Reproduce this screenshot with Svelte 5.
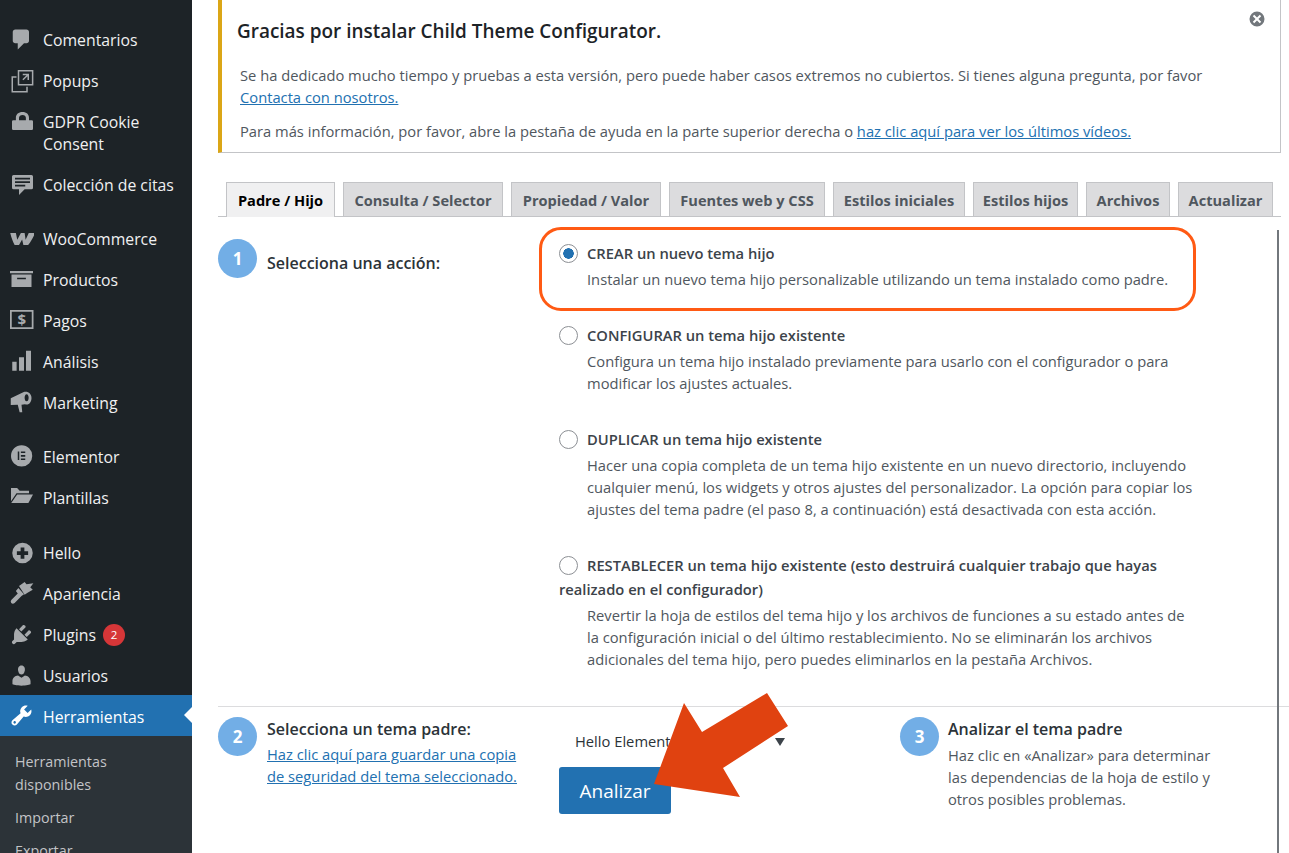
<script>
  const icons = {
    comment: 'M5 2h9q.82 0 1.41.59T16 4v7q0 .82-.59 1.41T14 13h-2l-5 5v-5H5q-.82 0-1.41-.59T3 11V4q0-.82.59-1.41T5 2z',
    popup: 'M7 1.500H19.500V14H7zM8.200 2.700V12.800H18.300V2.700zM2 6.500H6V7.700H3.200V18.300H13.800V15H15V19.500H2zM11 4.500H16V9.500H14.800V6.500L11.500 9.800 10.700 9 14 5.700H11z',
    lock: 'M3.400 9H5.500V7C5.500 4.200 7.600 2.400 10.800 2.400S16 4.200 16 7V9H18.200Q19.200 9 19.200 10V15.800Q19.200 16.800 18.200 16.800H3.400Q2.400 16.800 2.400 15.800V10Q2.400 9 3.400 9zM8 9h5.500V7c0-1.300-1.100-2.200-2.700-2.200S8 5.700 8 7z',
    quote: 'M3.600 2.400H18Q19.200 2.400 19.200 3.600V12.500Q19.200 13.700 18 13.700H12.500L8 18.400V13.700H3.600Q2.400 13.700 2.400 12.500V3.600Q2.400 2.400 3.600 2.400zM4.800 4.600V5.900H16.800V4.600zM4.800 7.400V8.700H16.800V7.400zM4.800 10.200V11.500H13V10.200z',
    woo: 'M1 5.600H5.500L6.600 11 9.500 5.600H12.500L13.300 11 15.800 5.600H20.800C19.500 9 17.500 12.500 15.300 15.200H11.500L10.500 10.800 8 15.200H4.500C3 12.500 1.800 9 1 5.600z',
    archive: 'M.8 3.200H19.200V5H.8zM2 6H18V16H2zM6.500 8.500V9.800H13.500V8.500z',
    pay: 'M.8 1.600H19.600V16.800H.8zM2.200 3V15.400H18.200V3z',
    chart: 'M2.600 10.200H6.100V17.400H2.600zM8 6.600H12V17.400H8zM13.600 1.400H17.600V17.400H13.600z',
    mega: 'M11.400 1.800L1.400 6.600V12L7 11.800 8.500 17.800H10.600L10 11.700 12.800 11.400C16 12.500 18 9.500 18 6.300 18 3 15 .5 11.400 1.800zM14.100 3.300C13 3.300 12.500 4.800 12.500 6.200S13 9 14.100 9 15.700 7.600 15.700 6.200 15.200 3.300 14.100 3.300z',
    elementor: 'M10.100 1a8.500 8.500 0 1 0 0 17 8.500 8.500 0 0 0 0-17zM7 6H8.200V12.800H7zM9.500 6H13V7.200H9.500zM9.500 8.800H13V10.100H9.500zM9.500 11.600H13V12.800H9.500z',
    folder: 'M1.600 2.400H6.500L8.500 4.500H16V6.500H6L1.600 13zM6.500 7.500H19.200L15.500 14.400H1.800z',
    plus: 'M10.800 2.200a8.200 8.200 0 1 0 0 16.400 8.200 8.200 0 0 0 0-16.400zM9.300 5.900h3v3h3v3h-3v3h-3v-3h-3v-3h3z',
    brush: 'M8 4L12.500 .8 14 2.500 19.500 1.800 17 5 19 7 14.500 9.500 12.500 11zM7.500 5.500L12 10.500 10 12 4.500 17.500Q3 18.800 1.800 17.500 .8 16.300 2 15L7 10 5.500 8z',
    plug: 'M13.110 4.360L9.870 7.600 8 5.730l3.240-3.240c.35-.34 1.050-.2 1.560.32.520.51.660 1.210.310 1.550zm-8 1.770l.91-1.120 9.010 9.010-1.190.84c-.71.71-2.630 1.160-3.820 1.160H6.140L4.900 17.260c-.59.59-1.540.59-2.120 0-.59-.58-.59-1.530 0-2.120l1.240-1.240v-3.880c0-1.130.4-3.190 1.090-3.890zm7.260 3.970l3.240-3.240c.34-.35 1.040-.21 1.550.31.520.51.660 1.210.310 1.550l-3.240 3.250z',
    user: 'M10 9.250c-2.270 0-2.730-3.440-2.730-3.440C7 4.020 7.820 2 9.970 2c2.160 0 2.980 2.020 2.710 3.810 0 0-.41 3.440-2.680 3.440zm0 2.570L12.720 10c2.390 0 4.520 2.330 4.520 4.530v2.490s-3.650 1.130-7.240 1.130c-3.650 0-7.240-1.130-7.240-1.130v-2.490c0-2.250 1.940-4.480 4.470-4.480z',
    tools: 'M16.680 9.770c-1.340 1.340-3.300 1.670-4.950.99l-5.410 6.520c-.99.99-2.590.99-3.580 0s-.99-2.590 0-3.570l6.520-5.420c-.68-1.650-.35-3.610.99-4.950 1.280-1.280 3.120-1.620 4.720-1.060l-2.890 2.890 2.820 2.820 2.860-2.870c.53 1.580.18 3.390-1.080 4.650zM3.810 16.210c.4.39 1.040.39 1.430 0 .4-.4.4-1.040 0-1.430-.39-.4-1.030-.4-1.430 0-.39.39-.39 1.030 0 1.430z'
  };

  const menu = [
    { label: 'Comentarios', icon: 'comment' },
    { label: 'Popups', icon: 'popup' },
    { label: 'GDPR Cookie Consent', icon: 'lock', tall: true },
    { label: 'Colección de citas', icon: 'quote' },
    { sep: 13 },
    { label: 'WooCommerce', icon: 'woo' },
    { label: 'Productos', icon: 'archive' },
    { label: 'Pagos', icon: 'pay', glyph: '$' },
    { label: 'Análisis', icon: 'chart' },
    { label: 'Marketing', icon: 'mega' },
    { sep: 13 },
    { label: 'Elementor', icon: 'elementor' },
    { label: 'Plantillas', icon: 'folder' },
    { sep: 14 },
    { label: 'Hello', icon: 'plus' },
    { label: 'Apariencia', icon: 'brush' },
    { label: 'Plugins', icon: 'plug', badge: 2 },
    { label: 'Usuarios', icon: 'user' },
    { label: 'Herramientas', icon: 'tools', active: true }
  ];

  const submenu = ['Herramientas disponibles', 'Importar', 'Exportar'];
  const tabs = ['Padre / Hijo', 'Consulta / Selector', 'Propiedad / Valor', 'Fuentes web y CSS', 'Estilos iniciales', 'Estilos hijos', 'Archivos', 'Actualizar'];

  const options = [
    { title: 'CREAR un nuevo tema hijo', desc: 'Instalar un nuevo tema hijo personalizable utilizando un tema instalado como padre.', checked: true },
    { title: 'CONFIGURAR un tema hijo existente', desc: 'Configura un tema hijo instalado previamente para usarlo con el configurador o para modificar los ajustes actuales.' },
    { title: 'DUPLICAR un tema hijo existente', desc: 'Hacer una copia completa de un tema hijo existente en un nuevo directorio, incluyendo cualquier menú, los widgets y otros ajustes del personalizador. La opción para copiar los ajustes del tema padre (el paso 8, a continuación) está desactivada con esta acción.' },
    { title: 'RESTABLECER un tema hijo existente (esto destruirá cualquier trabajo que hayas realizado en el configurador)', desc: 'Revertir la hoja de estilos del tema hijo y los archivos de funciones a su estado antes de la configuración inicial o del último restablecimiento. No se eliminarán los archivos adicionales del tema hijo, pero puedes eliminarlos en la pestaña Archivos.' }
  ];
</script>

<div class="page">
  <aside class="sidebar">
    <ul class="menu">
      {#each menu as item}
        {#if item.sep}
          <li class="sep" style="height: {item.sep}px"></li>
        {:else}
          <li class="item" class:tall={item.tall} class:active={item.active}>
            <svg class="icon" viewBox="0 0 20 20">
              <path fill-rule="evenodd" d={icons[item.icon]} />
              {#if item.glyph}
                <text x="10.200" y="13.400" text-anchor="middle" class="glyph">{item.glyph}</text>
              {/if}
            </svg>
            <span class="label">{item.label}</span>
            {#if item.badge}
              <span class="badge">{item.badge}</span>
            {/if}
          </li>
        {/if}
      {/each}
    </ul>
    <ul class="submenu">
      {#each submenu as sub}
        <li>{sub}</li>
      {/each}
    </ul>
  </aside>

  <main class="content">
    <div class="notice">
      <h2>Gracias por instalar Child Theme Configurator.</h2>
      <svg class="dismiss" viewBox="0 0 16 16">
        <path fill-rule="evenodd" d="M8 .5a7.500 7.500 0 1 0 0 15 7.500 7.500 0 0 0 0-15zM5.200 3.800L8 6.600l2.800-2.800 1.400 1.400L9.400 8l2.800 2.800-1.400 1.400L8 9.400l-2.800 2.800-1.400-1.400L6.600 8 3.800 5.200z" />
      </svg>
      <p>Se ha dedicado mucho tiempo y pruebas a esta versión, pero puede haber casos extremos no cubiertos. Si tienes alguna pregunta, por favor<br /><a href="#top">Contacta con nosotros.</a></p>
      <p>Para más información, por favor, abre la pestaña de ayuda en la parte superior derecha o <a href="#top">haz clic aquí para ver los últimos vídeos.</a></p>
    </div>

    <nav class="tabs">
      {#each tabs as tab, i}
        <span class="tab" class:current={i === 0}>{tab}</span>
      {/each}
    </nav>

    <div class="panel">
      <section class="actions">
        <div class="step-label">
          <span class="step">1</span>
          <strong>Selecciona una acción:</strong>
        </div>
        <div class="options">
          {#each options as opt}
            <div class="option" class:highlight={opt.checked}>
              <div class="opt-title"><span class="radio" class:checked={opt.checked}></span>{opt.title}</div>
              <div class="opt-desc">{opt.desc}</div>
            </div>
          {/each}
        </div>
      </section>

      <section class="parent">
        <span class="step">2</span>
        <div class="parent-text">
          <strong>Selecciona un tema padre:</strong>
          <a href="#top">Haz clic aquí para guardar una copia de seguridad del tema seleccionado.</a>
        </div>
        <div class="parent-form">
          <div class="select">Hello Elementor</div>
          <button>Analizar</button>
        </div>
        <span class="step">3</span>
        <div class="analyze-text">
          <strong>Analizar el tema padre</strong>
          <p>Haz clic en «Analizar» para determinar las dependencias de la hoja de estilo y otros posibles problemas.</p>
        </div>
      </section>

      <div class="rule"></div>
    </div>

    <svg class="arrow" viewBox="0 0 140 110">
      <polygon points="4,92 34,11 52,40 117,1 138,34 73,76 90,105" />
    </svg>
  </main>
</div>

<style>
  :global(body) {
    margin: 0;
    background: #fff;
    overflow: hidden;
  }

  .page {
    display: flex;
    height: 853px;
    overflow: hidden;
    font-family: "Open Sans", "Noto Sans", sans-serif;
    font-size: 14.72px;
    color: #50575e;
  }

  .sidebar {
    width: 192px;
    flex-shrink: 0;
    background: #1d2327;
    padding-top: 19px;
    overflow: hidden;
  }

  ul {
    list-style: none;
    margin: 0;
    padding: 0;
  }

  .item {
    position: relative;
    display: flex;
    align-items: center;
    height: 41px;
    padding-left: 43px;
    font-size: 15.8px;
    color: #f0f0f1;
  }

  .item.tall {
    height: 63px;
    align-items: flex-start;
    padding-top: 10px;
    padding-right: 30px;
    box-sizing: border-box;
    line-height: 22px;
  }

  .icon {
    position: absolute;
    left: 9px;
    top: 8px;
    width: 25px;
    height: 25px;
    fill: #a7aaad;
  }

  .glyph {
    font-size: 12px;
    font-weight: 700;
    font-family: "Open Sans", sans-serif;
  }

  .active {
    box-sizing: border-box;
    height: 41px;
    margin-top: -1px;
    padding-top: 2px;
    background: #2271b1;
    color: #fff;
  }

  .active .icon {
    fill: #fff;
  }

  .active::after {
    content: "";
    position: absolute;
    right: 0;
    top: 12px;
    border: 8px solid transparent;
    border-left: 0;
    border-right-color: #fff;
  }

  .badge {
    display: inline-flex;
    align-items: center;
    justify-content: center;
    width: 22px;
    height: 22px;
    margin-left: 7px;
    border-radius: 50%;
    background: #d63638;
    color: #fff;
    font-size: 11.5px;
  }

  .submenu {
    background: #2c3338;
    padding: 14px 15px 0;
    font-size: 14.3px;
    line-height: 23px;
    color: #c3c4c7;
    height: 200px;
  }

  .submenu li {
    width: 120px;
    margin-bottom: 10px;
  }

  .content {
    position: relative;
    flex: 1;
    min-width: 0;
    padding: 0 8px 0 26px;
  }

  .notice {
    position: relative;
    background: #fff;
    border: 1px solid #c3c4c7;
    border-top: 0;
    border-left: 4px solid #dba617;
    padding: 18px 18px 10px;
  }

  .notice h2 {
    margin: 0 0 20px -3px;
    font-size: 18.95px;
    line-height: 26px;
    font-weight: 600;
    color: #1d2327;
  }

  .notice p {
    margin: 0 0 12px;
    line-height: 22px;
  }

  .notice p:last-child {
    margin-bottom: 0;
  }

  a {
    color: #2271b1;
    text-decoration: underline;
  }

  .dismiss {
    position: absolute;
    right: 15px;
    top: 11px;
    width: 16px;
    height: 16px;
    fill: #72777c;
  }

  .tabs {
    display: grid;
    grid-template-columns: 109px 160px 150px 156px 132px 105px 84px 95px;
    gap: 8px;
    margin-top: 29px;
    padding-left: 8px;
    border-bottom: 1px solid #c3c4c7;
    height: 34px;
  }

  .tab {
    box-sizing: border-box;
    height: 34px;
    background: #dcdcde;
    border: 1px solid #c3c4c7;
    border-bottom: 0;
    line-height: 35px;
    font-size: 14.6px;
    font-weight: 700;
    text-align: center;
    white-space: nowrap;
    color: #50575e;
  }

  .tab.current {
    height: 35px;
    background: #f0f0f1;
    color: #000;
  }

  .panel {
    position: relative;
  }

  .rule {
    position: absolute;
    right: 2px;
    top: 13px;
    bottom: -100px;
    width: 2px;
    background: #72777c;
  }

  .actions {
    display: flex;
    height: 489px;
  }

  .step-label {
    display: flex;
    align-items: center;
    gap: 10px;
    width: 341px;
    height: 38px;
    margin-top: 22px;
    flex-shrink: 0;
  }

  .step-label strong {
    padding-top: 10px;
  }

  strong {
    font-weight: 600;
    font-size: 16px;
    color: #2c3338;
  }

  .step {
    display: flex;
    align-items: center;
    justify-content: center;
    width: 39px;
    height: 39px;
    flex-shrink: 0;
    border-radius: 50%;
    background: #72aee6;
    color: #fff;
    font-size: 17px;
    font-weight: 700;
  }

  .options {
    width: 640px;
    padding-top: 24px;
  }

  .option {
    position: relative;
    margin-bottom: 33px;
  }

  .highlight::after {
    content: "";
    position: absolute;
    left: -20px;
    top: -14px;
    width: 651px;
    height: 78px;
    border: 3px solid #ff5a14;
    border-radius: 22px;
  }

  .opt-title {
    font-weight: 600;
    line-height: 24px;
    color: #3c434a;
  }

  .radio {
    display: inline-block;
    box-sizing: border-box;
    width: 19px;
    height: 19px;
    margin-right: 9px;
    vertical-align: -4px;
    border: 1px solid #8c8f94;
    border-radius: 50%;
    background: #fff;
  }

  .radio.checked {
    background: radial-gradient(circle, #2271b1 0 5px, #fff 5.500px);
  }

  .opt-desc {
    margin: 3px 0 0 28px;
    line-height: 22px;
  }

  .parent {
    display: flex;
    align-items: flex-start;
    margin-right: -8px;
    padding-top: 10px;
    border-top: 1px solid #dcdcde;
  }

  .parent-text {
    width: 292px;
    margin-left: 10px;
    padding-right: 36px;
    box-sizing: border-box;
  }

  .parent-text strong,
  .analyze-text strong {
    display: block;
    line-height: 24px;
    margin-bottom: 3px;
  }

  .parent-text a {
    line-height: 21.500px;
  }

  .parent-form {
    width: 341px;
  }

  .select {
    position: relative;
    width: 236px;
    padding: 14px 0 0 16px;
    box-sizing: border-box;
    line-height: 20px;
    color: #2c3338;
  }

  .select::after {
    content: "";
    position: absolute;
    right: 10px;
    top: 21px;
    border: 5px solid transparent;
    border-top: 8px solid #3c434a;
    border-bottom: 0;
  }

  button {
    display: block;
    width: 112px;
    height: 47px;
    margin-top: 16px;
    border: 0;
    border-radius: 3px;
    background: #2271b1;
    color: #fff;
    font: inherit;
    font-size: 19px;
  }

  .analyze-text {
    width: 280px;
    margin-left: 9px;
  }

  .analyze-text p {
    margin: 0;
    line-height: 22px;
  }

  .arrow {
    position: absolute;
    left: 458px;
    top: 692px;
    width: 140px;
    height: 110px;
    fill: #e04210;
  }
</style>
